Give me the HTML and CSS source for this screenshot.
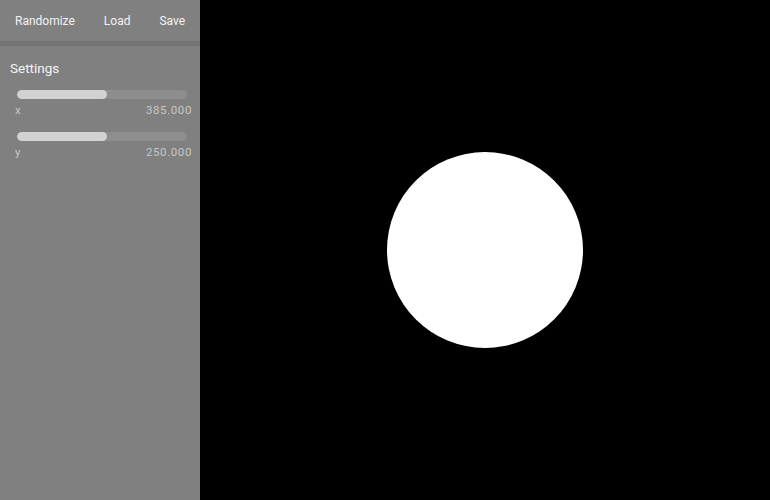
FILE: index.html
```html
<!DOCTYPE html>
<html>
<head>
<meta charset="utf-8">
<link rel="stylesheet" href="styles.css">
</head>
<body>
<div class="app">
  <aside class="sidebar">
    <div class="toolbar">
      <button class="tb-btn">Randomize</button>
      <button class="tb-btn">Load</button>
      <button class="tb-btn">Save</button>
    </div>
    <div class="sep"></div>
    <div class="settings">
      <div class="title">Settings</div>
      <div class="slider">
        <div class="track"><div class="fill" style="width:53%"></div></div>
        <div class="meta"><span>x</span><span>385.000</span></div>
      </div>
      <div class="slider">
        <div class="track"><div class="fill" style="width:53%"></div></div>
        <div class="meta"><span>y</span><span>250.000</span></div>
      </div>
    </div>
  </aside>
  <main class="canvas">
    <div class="circle"></div>
  </main>
</div>
</body>
</html>
```

FILE: styles.css
```css
html, body {
  margin: 0;
  padding: 0;
  width: 770px;
  height: 500px;
  overflow: hidden;
  background: #000;
  font-family: Roboto, "Liberation Sans", sans-serif;
}
.app {
  display: flex;
  width: 770px;
  height: 500px;
}
.sidebar {
  width: 200px;
  flex: none;
  background: #808080;
  display: flex;
  flex-direction: column;
}
.toolbar {
  height: 41px;
  display: flex;
  align-items: center;
  padding-left: 7px;
}
.tb-btn {
  background: none;
  border: none;
  color: #f2f2f2;
  font-family: Roboto, "Liberation Sans", sans-serif;
  font-size: 12px;
  padding: 0 8px;
  margin-right: 13px;
  line-height: 14px;
  margin-top: 0;
}
.sep {
  height: 5px;
  background: #757575;
}
.settings {
  padding: 13px 8px 0 10px;
}
.title {
  color: #f4f4f4;
  font-size: 13.5px;
  line-height: 18px;
  margin-bottom: 13px;
}
.slider {
  margin-left: 7px;
  margin-bottom: 15px;
}
.track {
  width: 170px;
  height: 9px;
  border-radius: 5px;
  background: #8e8e8e;
  overflow: hidden;
}
.fill {
  height: 100%;
  background: #d2d2d2;
  border-radius: 5px;
}
.meta {
  display: flex;
  justify-content: space-between;
  margin-left: -2px;
  width: 177px;
  color: #c6c6c6;
  font-size: 11.5px;
  line-height: 14px;
  margin-top: 4px;
  letter-spacing: 0.6px;
}
.canvas {
  flex: 1;
  background: #000;
  display: flex;
  align-items: center;
  justify-content: center;
}
.circle {
  width: 196px;
  height: 196px;
  border-radius: 50%;
  background: #fff;
}
```
